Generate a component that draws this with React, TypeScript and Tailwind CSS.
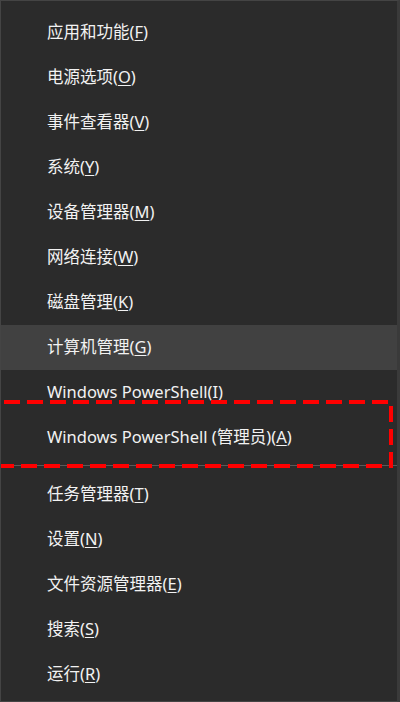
const items: [string, string][] = [
  ["应用和功能", "F"],
  ["电源选项", "O"],
  ["事件查看器", "V"],
  ["系统", "Y"],
  ["设备管理器", "M"],
  ["网络连接", "W"],
  ["磁盘管理", "K"],
  ["计算机管理", "G"],
  ["Windows PowerShell", "I"],
  ["Windows PowerShell (管理员)", "A"],
];

const items2: [string, string][] = [
  ["任务管理器", "T"],
  ["设置", "N"],
  ["文件资源管理器", "E"],
  ["搜索", "S"],
  ["运行", "R"],
];

const Row = ({ label, hotkey, active }: { label: string; hotkey: string; active?: boolean }) => (
  <div
    className={`h-[45px] flex items-center pl-[46px] text-[16.5px] text-[#f2f2f2] ${
      active ? "bg-[#414141]" : ""
    }`}
  >
    <span>
      {label}(<span className="underline underline-offset-2">{hotkey}</span>)
    </span>
  </div>
);

export default function App() {
  return (
    <div
      className="relative w-[400px] h-[702px] overflow-hidden bg-[#2b2b2b] border border-[#444444] border-r-[3px] border-r-[#3a3a3a] pt-[9px]"
      style={{ fontFamily: '"Noto Sans", "Noto Sans CJK SC", sans-serif' }}
    >
      {items.map(([l, k]) => (
        <Row key={l} label={l} hotkey={k} active={k === "G"} />
      ))}
      <div className="h-px bg-[#5a5a5a] mt-[5px] mb-[6px]" />
      {items2.map(([l, k]) => (
        <Row key={l} label={l} hotkey={k} />
      ))}
      <svg className="absolute left-0 top-0 pointer-events-none" width="400" height="702">
        <rect
          x="-20"
          y="401"
          width="410"
          height="64"
          fill="none"
          stroke="#ff0000"
          strokeWidth="4"
          strokeDasharray="16 7"
        />
      </svg>
    </div>
  );
}
